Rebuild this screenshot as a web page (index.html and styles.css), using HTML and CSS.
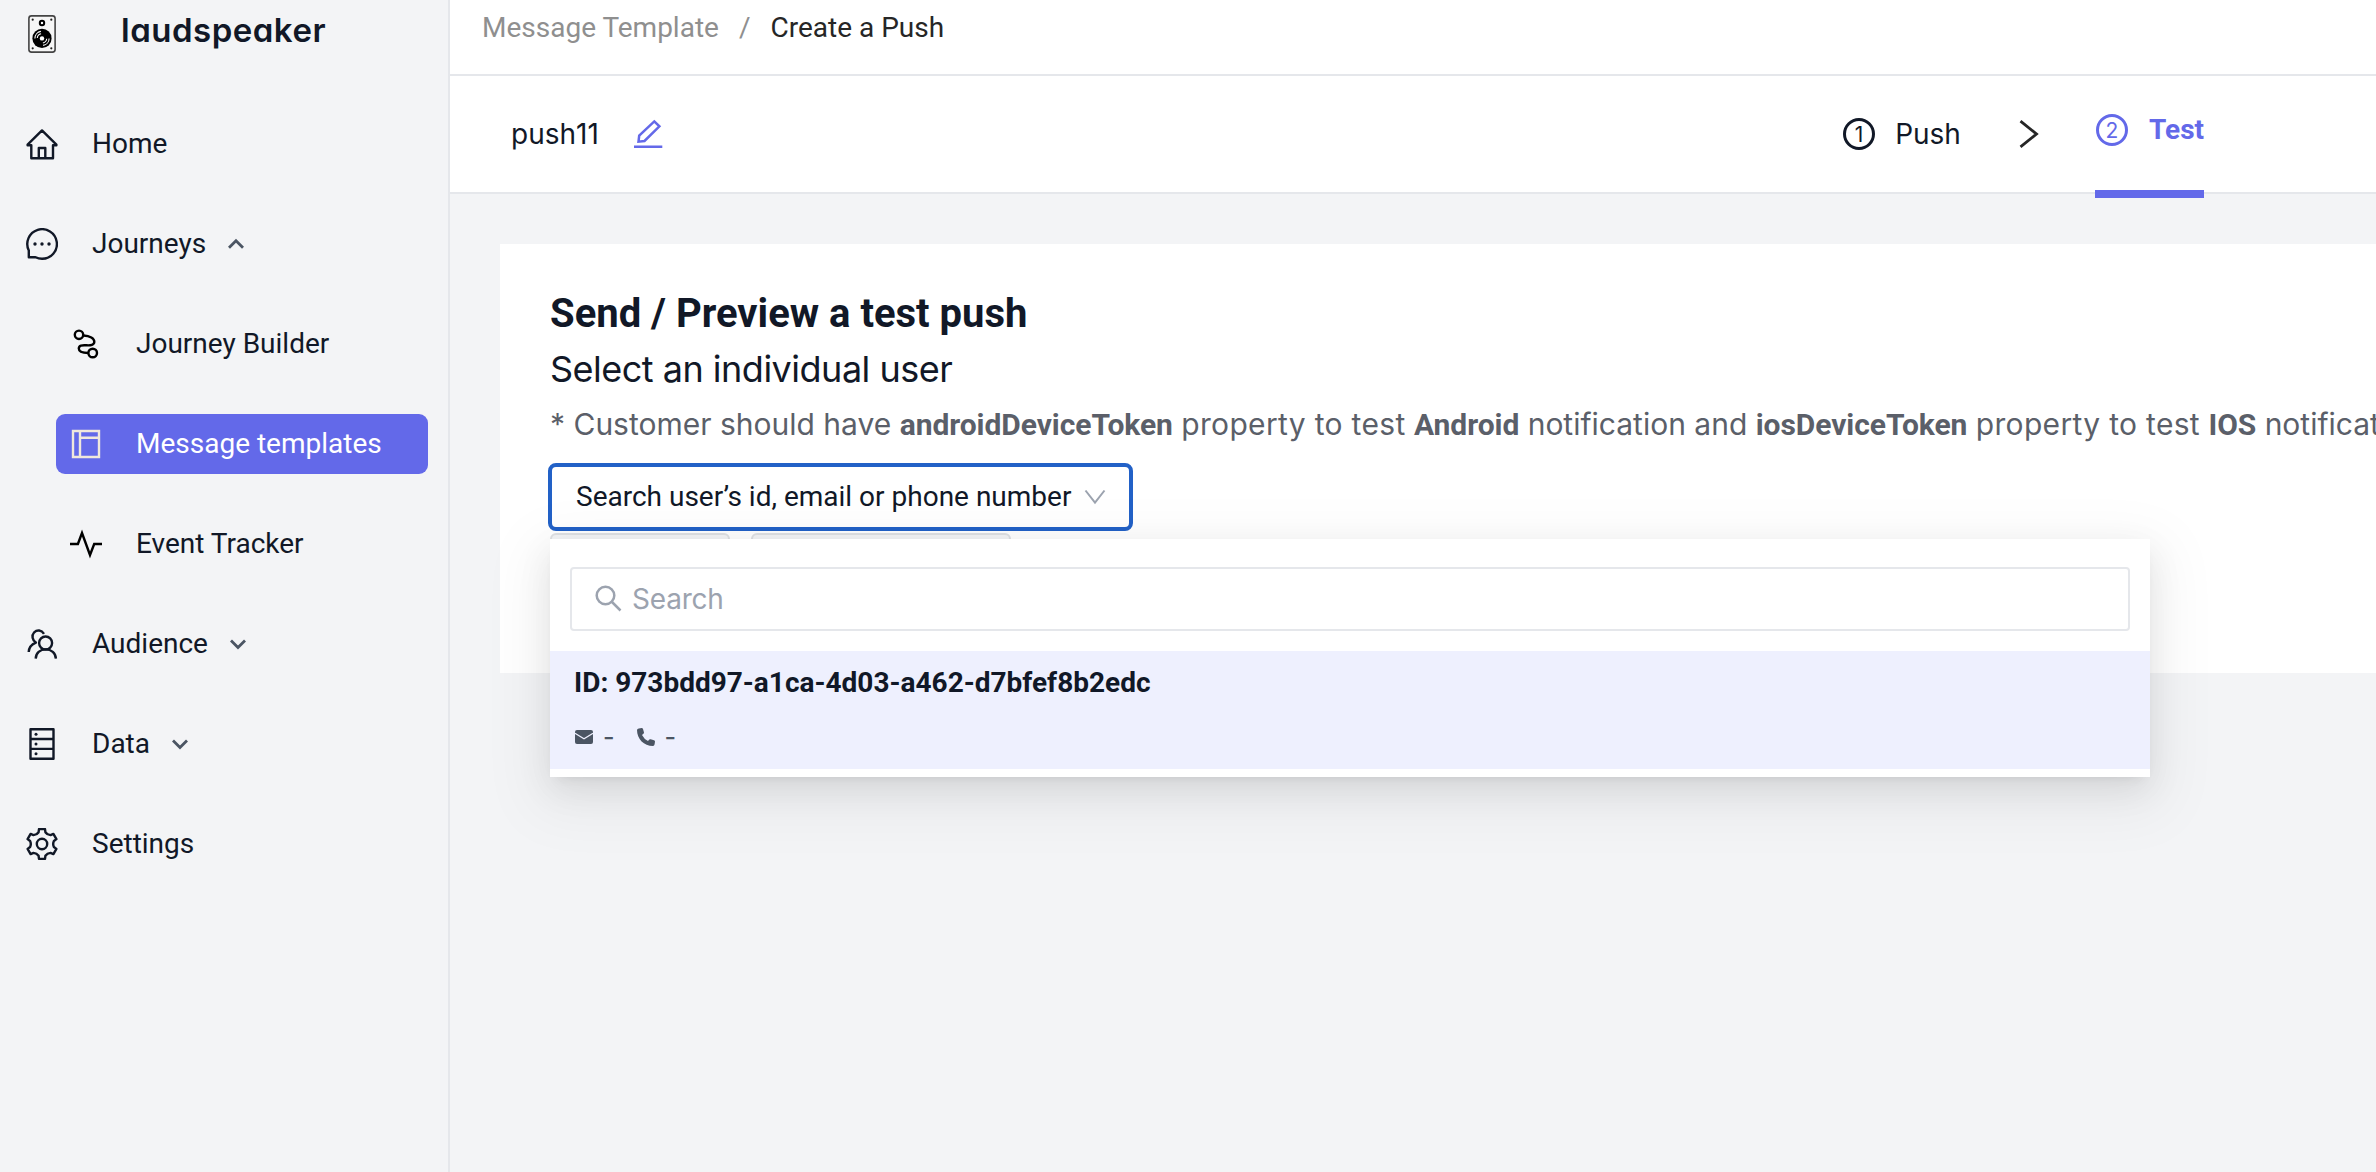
FILE: index.html
```html
<!DOCTYPE html>
<html lang="en">
<head>
<meta charset="utf-8">
<title>Create a Push</title>
<link rel="stylesheet" href="styles.css">
</head>
<body>
<div class="app">
  <aside class="sidebar">
    <div class="brand">
      <svg class="brand-logo" width="28" height="38" viewBox="0 0 28 38">
        <rect x=".9" y=".9" width="26.2" height="36.2" rx="2.6" fill="#f6f6f6" stroke="#444" stroke-width="1.6"/>
        <circle cx="4.7" cy="4.7" r="1.1" fill="#222"/><circle cx="23.3" cy="4.7" r="1.1" fill="#222"/>
        <circle cx="4.7" cy="33.3" r="1.1" fill="#222"/><circle cx="23.3" cy="33.3" r="1.1" fill="#222"/>
        <circle cx="14" cy="8" r="2.2" fill="#fff" stroke="#000" stroke-width="2"/>
        <circle cx="14" cy="23.4" r="9.6"/>
        <circle cx="14" cy="23.4" r="2.2" fill="#fff"/>
        <path d="M6.9 23.4a7.1 7.1 0 0 1 6-7M9.3 23a4.8 4.8 0 0 1 3.8-4.2M21.1 23.4a7.1 7.1 0 0 1-6 7M18.7 23.8a4.8 4.8 0 0 1-3.8 4.2" fill="none" stroke="#fff" stroke-width="1.1"/>
      </svg>
      <span class="brand-name">laudspeaker</span>
    </div>
    <nav class="menu">
      <a class="item">
        <svg class="icon" viewBox="0 0 32 32"><path d="M16 2.4 1.6 16.6V17.3H5.3V30.3H27V17.3H30.4V16.6ZM12.8 30V20H19.3V30"/></svg>
        <span>Home</span>
      </a>
      <a class="item">
        <svg class="icon" viewBox="0 0 32 32"><path d="M2.8 29.2V22.5A14.8 14.8 0 1 1 16 30.8C13.5 30.8 11.5 30.2 9.5 29.2Z"/><g class="dot"><circle cx="9" cy="16" r="1.7"/><circle cx="16" cy="16" r="1.7"/><circle cx="23" cy="16" r="1.7"/></g></svg>
        <span>Journeys</span>
        <svg class="caret" viewBox="0 0 24 24"><path d="M5 15.8 12 8.8 19 15.8"/></svg>
      </a>
      <a class="item sub">
        <svg class="icon black" viewBox="0 0 32 32"><circle cx="9" cy="6.8" r="4.2"/><circle cx="22.7" cy="25" r="4.3"/><path d="M13.5 7.5C20 7.8 24.3 10.5 24.3 13.8C24.3 17 20.5 17.6 16.5 17.3C12 17 8.8 17.3 8.8 20.5C8.8 24.2 13.5 24.9 18.4 25"/></svg>
        <span>Journey Builder</span>
      </a>
      <a class="item sub active">
        <svg class="icon" viewBox="0 0 32 32"><path d="M3 3H29V29H3ZM10 3V29M10 9.7H29"/></svg>
        <span>Message templates</span>
      </a>
      <a class="item sub">
        <svg class="icon black" viewBox="0 0 32 32"><path d="M0 16H7.9L12 5 20 27 24.2 16H32"/></svg>
        <span>Event Tracker</span>
      </a>
      <a class="item">
        <svg class="icon" viewBox="0 0 32 32"><circle cx="19.6" cy="15" r="6.5"/><path d="M9.7 30.6C9.9 25 14 21.4 19.7 21.4S29.6 25 29.9 30.6M18 5.8C15.5 1.8 11 1.6 8.2 4.3C5.3 7.5 6.3 12.3 9.9 14.6C5.5 16.4 2.9 19.5 2.7 24"/></svg>
        <span>Audience</span>
        <svg class="caret" viewBox="0 0 24 24"><path d="M5 8.5 12 15.5 19 8.5"/></svg>
      </a>
      <a class="item">
        <svg class="icon" viewBox="0 0 32 32"><path d="M4.5 1.3H27.5V30.8H4.5ZM4.5 11H27.5M4.5 20.9H27.5"/><g class="dot"><circle cx="10" cy="6.2" r="1.5"/><circle cx="10" cy="16" r="1.5"/><circle cx="10" cy="25.8" r="1.5"/></g></svg>
        <span>Data</span>
        <svg class="caret" viewBox="0 0 24 24"><path d="M5 8.5 12 15.5 19 8.5"/></svg>
      </a>
      <a class="item">
        <svg class="icon" viewBox="-16 -16 32 32"><path d="M-3-14.9H3L3.4-11.8Q5.25-9.1 8.5-8.84L11.4-10.05 14.4-4.85 11.9-2.96Q10.5 0 11.9 2.96L14.4 4.85 11.4 10.05 8.5 8.84Q5.25 9.1 3.4 11.8L3 14.9H-3L-3.4 11.8Q-5.25 9.1-8.5 8.84L-11.4 10.05-14.4 4.85-11.9 2.96Q-10.5 0-11.9-2.96L-14.4-4.85-11.4-10.05-8.5-8.84Q-5.25-9.1-3.4-11.8Z"/><circle r="5.2"/></svg>
        <span>Settings</span>
      </a>
    </nav>
  </aside>

  <main class="main">
    <header class="crumbs">
      <span class="crumb-parent">Message Template</span>
      <span class="crumb-parent">/</span>
      <span>Create a Push</span>
    </header>

    <section class="toolbar">
      <div class="name">
        <span>push11</span>
        <svg width="32" height="32" viewBox="0 0 32 32" fill="none" stroke="#6469e9" stroke-width="2.5"><path d="M6.5 23.7 7.2 17.5 22.3 3.4 27.4 8.3 12.5 23ZM2 28.8H30.3"/></svg>
      </div>
      <div class="steps">
        <div class="step"><span class="num">1</span><span>Push</span></div>
        <svg class="next" width="20" height="30" viewBox="0 0 20 30"><path d="M1.5 2.2 17.5 15 1.5 27.8" fill="none" stroke="#262626" stroke-width="2.8"/></svg>
        <div class="step current"><span class="num">2</span><span>Test</span></div>
      </div>
    </section>

    <section class="content">
      <div class="card">
        <h1>Send / Preview a test push</h1>
        <h2>Select an individual user</h2>
        <p class="hint">* Customer should have <b>androidDeviceToken</b> <span class="loose">property to test</span> <b>Android</b> notification and <b>iosDeviceToken</b> <span class="loose">property to test</span> <b>IOS</b> notification</p>
        <div class="picker">
          <div class="select">
            <span>Search user’s id, email or phone number</span>
            <svg width="22" height="16" viewBox="0 0 22 16"><path d="M1.5 1.5 11 13.7 20.5 1.5" fill="none" stroke="#9ca3af" stroke-width="2"/></svg>
          </div>
          <div class="popup">
            <div class="search">
              <svg width="28" height="28" viewBox="0 0 28 28" fill="none" stroke="#9ca3af" stroke-width="2.5"><circle cx="10.5" cy="10.5" r="8.8"/><path d="M17 17 25.5 25.5"/></svg>
              <span>Search</span>
            </div>
            <div class="option">
              <div class="option-id">ID: 973bdd97-a1ca-4d03-a462-d7bfef8b2edc</div>
              <div class="option-meta">
                <svg width="18" height="14" viewBox="0 0 18 14"><rect width="18" height="14" rx="2"/><path d="M0 3.2 9 8.8 18 3.2" fill="none" stroke="#eef0fe" stroke-width="1.2"/></svg>
                <span>-</span>
                <svg class="phone" width="18" height="18" viewBox="0 0 18 18"><path d="M1.8.4 4.7 0Q5.7 0 6 1L7 4.4Q7 5.2 6.4 5.7L5 7Q7 11 11 13L12.3 11.6Q13 11 13.7 11.2L17 12.3Q18 12.6 18 13.5L17.6 16.3Q17.3 17.8 16 18C7 18 0 11 0 2Q.2.7 1.8.4Z"/></svg>
                <span>-</span>
              </div>
            </div>
          </div>
        </div>
        <div class="actions"><button class="btn" disabled></button><button class="btn wide" disabled></button></div>
      </div>
    </section>
  </main>
</div>
</body>
</html>
```
FILE: styles.css
```css
* { box-sizing: border-box; }

body {
  margin: 0;
  background: #f3f4f6;
  color: #111827;
  font: 400 28px/44px Roboto, sans-serif;
  overflow: hidden;
}

svg { display: block; flex: none; }
h1, h2, p { margin: 0; }

.app { display: flex; height: 1172px; }

/* Sidebar */
.sidebar {
  flex: none;
  width: 450px;
  border-right: 2px solid #e5e7eb;
}
.brand {
  display: flex;
  align-items: flex-start;
  height: 114px;
  padding: 15px 0 0 28px;
}
.brand-name {
  margin: -7px 0 0 65px;
  font: 600 33px/44px Inter, sans-serif;
  font-feature-settings: "cv11";
  letter-spacing: .5px;
}
.menu {
  display: flex;
  flex-direction: column;
  gap: 40px;
  padding-right: 20px;
}
.item {
  display: flex;
  align-items: center;
  height: 60px;
  margin-left: 12px;
  padding-left: 14px;
  border-radius: 9px;
}
.item.sub { margin-left: 56px; }
.icon {
  width: 32px;
  height: 32px;
  margin-right: 34px;
  fill: none;
  stroke: #111827;
  stroke-width: 2.4;
  stroke-linejoin: round;
}
.icon.black { stroke: #000; stroke-linejoin: miter; }
.icon .dot { fill: #111827; stroke: none; }
.caret {
  width: 24px;
  height: 24px;
  margin-left: 18px;
  fill: none;
  stroke: #4b5563;
  stroke-width: 2.8;
}
.active { background: #6369e9; color: #fff; }
.active .icon { stroke: #f0e8dc; stroke-linejoin: miter; }

/* Header */
.main {
  flex: 1;
  min-width: 0;
  overflow: hidden;
}
.crumbs {
  display: flex;
  gap: 20px;
  height: 76px;
  padding: 6px 0 0 32px;
  background: #fff;
  border-bottom: 2px solid #e5e7eb;
  color: #262626;
}
.crumb-parent { color: #8f8f8f; }
.toolbar {
  display: flex;
  justify-content: space-between;
  height: 118px;
  padding: 0 172px 0 61px;
  background: #fff;
  border-bottom: 2px solid #e5e7eb;
}
.name {
  display: flex;
  align-items: center;
  gap: 33px;
  font-family: Inter, sans-serif;
  font-kerning: none;
}
.steps { display: flex; align-items: center; }
.step {
  display: flex;
  align-items: center;
  gap: 20px;
  font-family: Inter, sans-serif;
}
.num {
  width: 32px;
  height: 32px;
  border: 3px solid currentColor;
  border-radius: 50%;
  font: 400 21px/27px Inter, sans-serif;
  text-align: center;
}
.next { margin: 0 56px 0 58px; }
.current {
  position: relative;
  align-self: flex-start;
  gap: 21px;
  height: 122px;
  padding: 0 0 6px 1px;
  border-bottom: 8px solid #6369e9;
  color: #6369e9;
  font: 700 28px/44px Roboto, sans-serif;
}

/* Card */
.content { padding: 50px 0 0 50px; }
.card {
  height: 429px;
  padding: 42px 0 0 50px;
  background: #fff;
  white-space: nowrap;
}
.card h1 { font: 700 40px/56px Roboto, sans-serif; }
.card h2 {
  font: 400 36px/54px Inter, sans-serif;
  letter-spacing: -.5px;
}
.hint {
  font: 400 30px/56px Inter, sans-serif;
  color: #5b5f69;
}
.hint b { font-family: Roboto, sans-serif; letter-spacing: -.06px; }
.loose { letter-spacing: .32px; }

.picker {
  position: relative;
  width: 1600px;
  margin-top: 11px;
}
.select {
  display: flex;
  align-items: center;
  justify-content: space-between;
  width: 585px;
  height: 68px;
  margin: -1px 0 0 -2px;
  padding: 0 23px 1px 24px;
  border: 4px solid #2261c7;
  border-radius: 8px;
}
.popup {
  position: absolute;
  z-index: 1;
  top: 76px;
  left: 0;
  width: 1600px;
  height: 238px;
  padding-top: 28px;
  background: #fff;
  box-shadow: 0 12px 32px 0 rgba(0, 0, 0, .08), 0 6px 12px -8px rgba(0, 0, 0, .12), 0 18px 56px 16px rgba(0, 0, 0, .05);
}
.search {
  display: flex;
  align-items: center;
  gap: 9px;
  height: 64px;
  margin: 0 20px;
  padding-left: 23px;
  border: 2px solid #e5e7eb;
  border-radius: 4px;
  color: #9ca3af;
  font-family: Inter, sans-serif;
  letter-spacing: -.2px;
}
.option {
  height: 118px;
  margin-top: 20px;
  padding: 10px 24px 0;
  background: #eef0fe;
}
.option-id { font-weight: 700; }
.option-meta {
  display: flex;
  align-items: center;
  gap: 10px;
  margin-top: 10px;
  padding-left: 1px;
  color: #4b5563;
  fill: #4b5563;
  font: 500 25px/44px Inter, sans-serif;
}
.phone { margin-left: 12px; }

.actions { display: flex; gap: 21px; margin-top: 2px; }
.btn {
  width: 180px;
  height: 60px;
  border: 2px solid #dfe1e4;
  border-radius: 6px;
  background: #f3f4f6;
}
.btn.wide { width: 260px; }
```
